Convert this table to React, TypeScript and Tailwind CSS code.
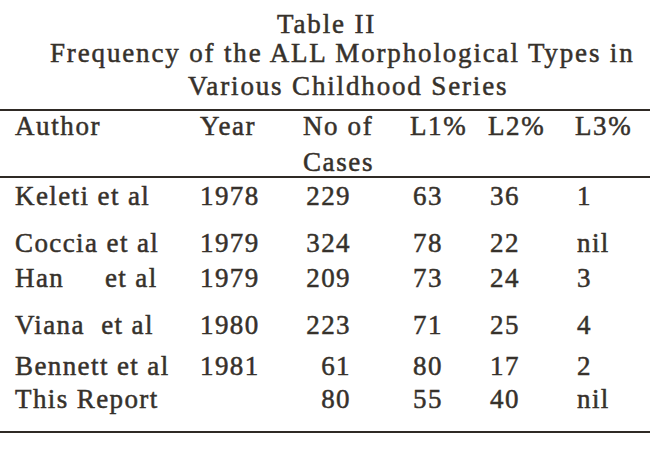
import React from 'react';

interface Row {
  author: string;
  year: string;
  cases: string;
  l1: string;
  l2: string;
  l3: string;
  mt: string;
}

const rows: Row[] = [
  { author: 'Keleti et al', year: '1978', cases: '229', l1: '63', l2: '36', l3: '1', mt: 'mt-[3px]' },
  { author: 'Coccia et al', year: '1979', cases: '324', l1: '78', l2: '22', l3: 'nil', mt: 'mt-[17px]' },
  { author: 'Han\u00a0\u00a0\u00a0\u00a0\u00a0et al', year: '1979', cases: '209', l1: '73', l2: '24', l3: '3', mt: 'mt-[5px]' },
  { author: 'Viana\u00a0\u00a0et al', year: '1980', cases: '223', l1: '71', l2: '25', l3: '4', mt: 'mt-[17px]' },
  { author: 'Bennett et al', year: '1981', cases: '61', l1: '80', l2: '17', l3: '2', mt: 'mt-[11px]' },
  { author: 'This Report', year: '', cases: '80', l1: '55', l2: '40', l3: 'nil', mt: 'mt-[3px]' },
];

const cols = 'grid grid-cols-[200px_100px_110px_78px_87px_1fr]';

const Rule: React.FC = () => <div className="h-[2px] w-full bg-[#2f2a25]" />;

const App: React.FC = () => {
  return (
    <div
      className="w-[650px] h-[464px] bg-white text-[#36312b] overflow-hidden [-webkit-text-stroke:0.5px_#36312b]"
      style={{ fontFamily: '"Liberation Serif", "Times New Roman", serif' }}
    >
      {/* Caption */}
      <div className="pt-[9px] text-[27px] tracking-[1.85px] whitespace-nowrap">
        <div className="pl-[277px] leading-[30px]">Table II</div>
        <div className="pl-[50px] leading-[28px]">Frequency of the ALL Morphological Types in</div>
        <div className="pl-[188px] leading-[30px] mt-[4px]">Various Childhood Series</div>
      </div>

      <div className="mt-[8px]">
        <Rule />
      </div>

      {/* Header */}
      <div className="text-[27px] tracking-[1.6px] whitespace-nowrap">
        <div className={`${cols} leading-[31px]`}>
          <div className="pl-[15px]">Author</div>
          <div>Year</div>
          <div className="pl-[3px]">No of</div>
          <div>L1%</div>
          <div>L2%</div>
          <div>L3%</div>
        </div>
        <div className={`${cols} leading-[28px] mt-[6px]`}>
          <div />
          <div />
          <div className="pl-[3px]">Cases</div>
        </div>
      </div>

      <Rule />

      {/* Body */}
      <div className="text-[27px] tracking-[1.4px] whitespace-nowrap">
        {rows.map((r) => (
          <div key={r.author} className={`${cols} leading-[30px] ${r.mt}`}>
            <div className="pl-[15px]">{r.author}</div>
            <div>{r.year}</div>
            <div className="text-right pr-[59px]">{r.cases}</div>
            <div className="pl-[3px]">{r.l1}</div>
            <div className="pl-[2px]">{r.l2}</div>
            <div className="pl-[2px]">{r.l3}</div>
          </div>
        ))}
      </div>

      <div className="mt-[17px]">
        <Rule />
      </div>
    </div>
  );
};

export default App;
